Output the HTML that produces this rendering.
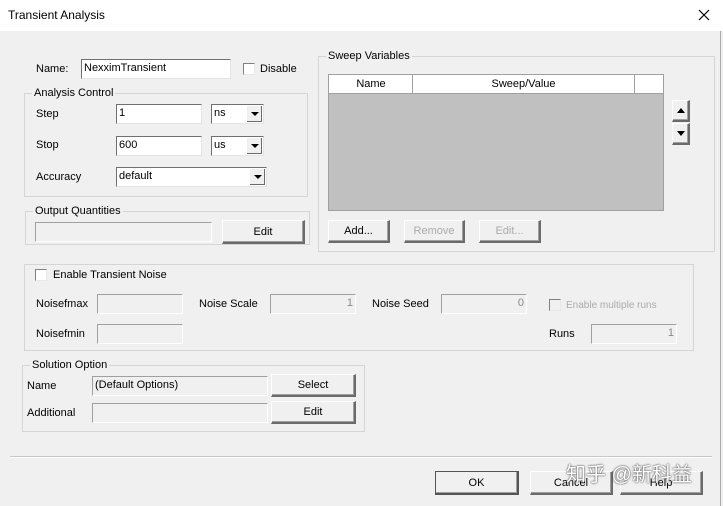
<!DOCTYPE html>
<html><head><meta charset="utf-8"><style>
body{margin:0;width:723px;height:506px;background:#f0f0f0;font-family:"Liberation Sans",Arial,sans-serif;font-size:11px;color:#000;position:relative;overflow:hidden}
.a{position:absolute}
.t{position:absolute;white-space:nowrap;line-height:13px}
.in{position:absolute;background:#fff;border-top:1px solid #707070;border-left:1px solid #707070;border-right:1px solid #e3e3e3;border-bottom:1px solid #e3e3e3;box-sizing:border-box;padding:1px 2px;line-height:14px}
.dis{background:#f0f0f0;border-top:1px solid #a0a0a0;border-left:1px solid #a0a0a0;border-right:1px solid #fff;border-bottom:1px solid #fff;color:#888;text-align:right}
.grp{position:absolute;border:1px solid #d5d5d5;box-sizing:border-box}
.lg{position:absolute;background:#f0f0f0;padding:0 2px;top:-7px;left:7px;line-height:13px;white-space:nowrap}
.btn{position:absolute;box-sizing:border-box;background:#f0f0f0;border-top:1px solid #fff;border-left:1px solid #fff;border-right:2px solid #6a6a6a;border-bottom:2px solid #6a6a6a;text-align:center;display:flex;align-items:center;justify-content:center;box-shadow:inset -1px -1px 0 #a0a0a0}
.dd{position:absolute;right:1px;top:1px;width:15px;bottom:1px;background:#f0f0f0;border-right:1px solid #6a6a6a;border-bottom:1px solid #6a6a6a;box-sizing:border-box}
.dd:after{content:"";position:absolute;left:4px;top:6px;border-left:4px solid transparent;border-right:4px solid transparent;border-top:4px solid #000}
.cb{position:absolute;width:12px;height:12px;box-sizing:border-box;background:#fff;border-top:1px solid #808080;border-left:1px solid #808080;border-right:1px solid #e8e8e8;border-bottom:1px solid #e8e8e8}
</style></head><body>
<div class="a" style="left:0;top:0;width:723px;height:31px;background:#fff"></div>
<div class="t" style="left:8px;top:9px;font-size:12px">Transient Analysis</div>
<svg class="a" style="left:698px;top:9px" width="12" height="12"><path d="M1 1L11 11M11 1L1 11" stroke="#000" stroke-width="1.2"/></svg>
<div class="a" style="left:720px;top:31px;width:1px;height:475px;background:#aaa"></div>

<div class="t" style="left:36px;top:63px">Name:</div>
<div class="in" style="left:81px;top:59px;width:150px;height:20px">NexximTransient</div>
<div class="cb" style="left:243px;top:63px"></div>
<div class="t" style="left:260px;top:63px">Disable</div>

<div class="grp" style="left:24px;top:93px;width:284px;height:104px"><div class="lg">Analysis Control</div></div>
<div class="t" style="left:36px;top:108px">Step</div>
<div class="in" style="left:116px;top:104px;width:86px;height:20px">1</div>
<div class="in" style="left:211px;top:104px;width:53px;height:20px">ns<div class="dd"></div></div>
<div class="t" style="left:36px;top:139px">Stop</div>
<div class="in" style="left:116px;top:136px;width:86px;height:20px">600</div>
<div class="in" style="left:211px;top:136px;width:53px;height:20px">us<div class="dd"></div></div>
<div class="t" style="left:36px;top:171px">Accuracy</div>
<div class="in" style="left:116px;top:167px;width:151px;height:20px">default<div class="dd"></div></div>

<div class="grp" style="left:25px;top:211px;width:285px;height:34px"><div class="lg">Output Quantities</div></div>
<div class="in dis" style="left:35px;top:222px;width:177px;height:20px"></div>
<div class="btn" style="left:222px;top:220px;width:83px;height:24px">Edit</div>

<div class="grp" style="left:318px;top:56px;width:397px;height:196px"><div class="lg">Sweep Variables</div></div>
<div class="a" style="left:328px;top:74px;width:336px;height:137px;background:#c0c0c0;border:1px solid #a0a0a0;box-sizing:border-box"></div>
<div class="a" style="left:329px;top:75px;width:334px;height:18px;background:#fff;border-bottom:1px solid #a0a0a0"></div>
<div class="t" style="left:329px;top:78px;width:84px;text-align:center">Name</div>
<div class="a" style="left:412px;top:75px;width:1px;height:18px;background:#a0a0a0"></div>
<div class="t" style="left:413px;top:78px;width:221px;text-align:center">Sweep/Value</div>
<div class="a" style="left:634px;top:75px;width:1px;height:18px;background:#a0a0a0"></div>
<div class="btn" style="left:672px;top:100px;width:18px;height:22px"><svg width="8" height="5"><path d="M0 5L4 0L8 5Z"/></svg></div>
<div class="btn" style="left:672px;top:123px;width:18px;height:22px"><svg width="8" height="5"><path d="M0 0L4 5L8 0Z"/></svg></div>
<div class="btn" style="left:328px;top:220px;width:62px;height:23px">Add...</div>
<div class="btn" style="left:404px;top:220px;width:61px;height:23px;color:#aaa">Remove</div>
<div class="btn" style="left:479px;top:220px;width:62px;height:23px;color:#aaa">Edit...</div>

<div class="grp" style="left:24px;top:264px;width:670px;height:87px"></div>
<div class="cb" style="left:35px;top:269px"></div>
<div class="t" style="left:53px;top:269px">Enable Transient Noise</div>
<div class="t" style="left:36px;top:298px">Noisefmax</div>
<div class="in dis" style="left:97px;top:294px;width:86px;height:20px"></div>
<div class="t" style="left:199px;top:298px">Noise Scale</div>
<div class="in dis" style="left:270px;top:294px;width:86px;height:20px">1</div>
<div class="t" style="left:372px;top:298px">Noise Seed</div>
<div class="in dis" style="left:441px;top:294px;width:86px;height:20px">0</div>
<div class="cb" style="left:549px;top:299px;background:#f0f0f0"></div>
<div class="t" style="left:566px;top:299px;color:#aaa;font-size:10px">Enable multiple runs</div>
<div class="t" style="left:36px;top:328px">Noisefmin</div>
<div class="in dis" style="left:97px;top:324px;width:86px;height:20px"></div>
<div class="t" style="left:549px;top:328px">Runs</div>
<div class="in dis" style="left:591px;top:324px;width:86px;height:20px">1</div>

<div class="grp" style="left:22px;top:365px;width:343px;height:67px"><div class="lg">Solution Option</div></div>
<div class="t" style="left:27px;top:380px">Name</div>
<div class="in dis" style="left:92px;top:376px;width:176px;height:20px;text-align:left;color:#000">(Default Options)</div>
<div class="btn" style="left:271px;top:374px;width:85px;height:23px">Select</div>
<div class="t" style="left:27px;top:407px">Additional</div>
<div class="in dis" style="left:92px;top:403px;width:176px;height:20px"></div>
<div class="btn" style="left:271px;top:401px;width:85px;height:23px">Edit</div>

<div class="a" style="left:10px;top:456px;width:702px;height:1px;background:#c8c8c8"></div>
<div class="a" style="left:10px;top:457px;width:702px;height:1px;background:#fff"></div>
<div class="btn" style="left:435px;top:471px;width:84px;height:24px;border:1px solid #555;border-right:2px solid #555;border-bottom:2px solid #555">OK</div>
<div class="btn" style="left:530px;top:471px;width:83px;height:24px">Cancel</div>
<div class="btn" style="left:620px;top:471px;width:83px;height:24px">Help</div>
<div class="t" style="left:566px;top:463px;font-size:20px;line-height:24px;color:#fff;text-shadow:0 0 2px #555,0 0 1px #333;font-family:'Liberation Sans','Noto Sans CJK SC',sans-serif">知乎 @新科益</div>
</body></html>
